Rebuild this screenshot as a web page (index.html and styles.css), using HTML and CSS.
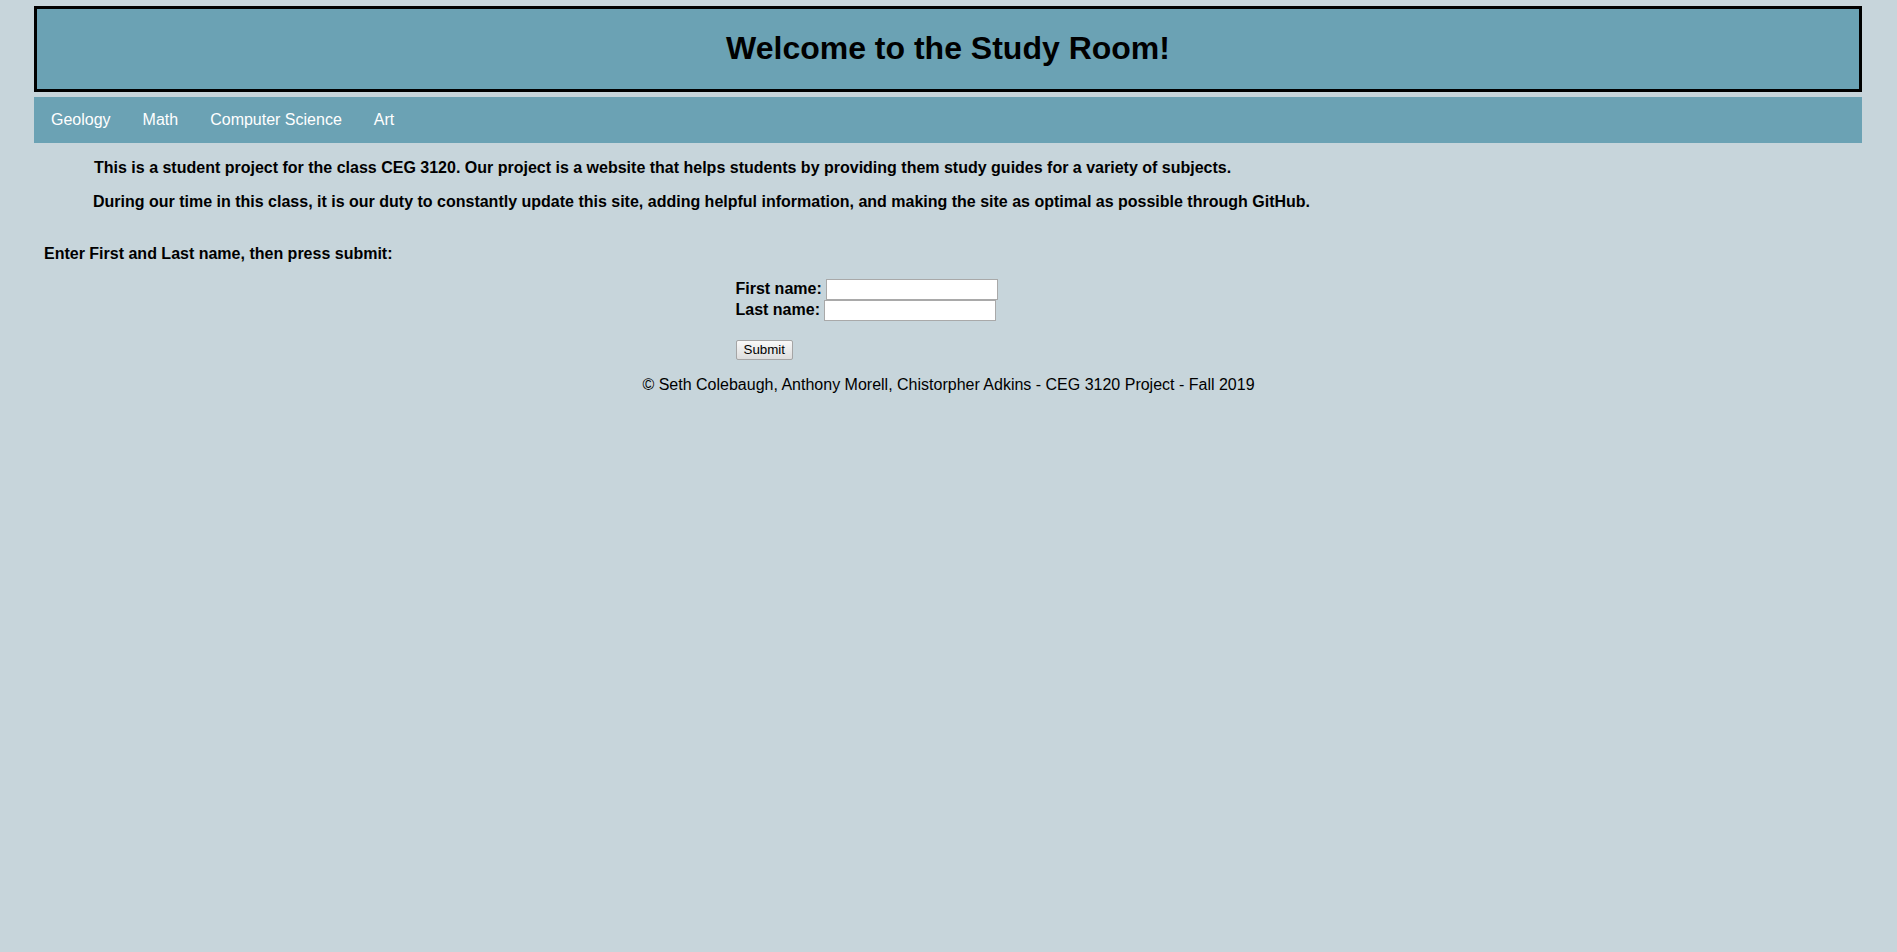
FILE: index.html
```html
<!DOCTYPE html>
<html lang="en">
<head>
<meta charset="utf-8">
<title>Study Room</title>
<link rel="stylesheet" href="styles.css">
</head>
<body>
<div class="page">
  <header class="site-header">
    <h1 class="site-title">Welcome to the Study Room!</h1>
  </header>
  <nav class="site-nav">
    <a class="nav-link" href="#">Geology</a>
    <a class="nav-link" href="#">Math</a>
    <a class="nav-link" href="#">Computer Science</a>
    <a class="nav-link" href="#">Art</a>
  </nav>
  <main class="content">
    <p class="intro intro-first">This is a student project for the class CEG 3120. Our project is a website that helps students by providing them study guides for a variety of subjects.</p>
    <p class="intro">During our time in this class, it is our duty to constantly update this site, adding helpful information, and making the site as optimal as possible through GitHub.</p>
    <p class="prompt">Enter First and Last name, then press submit:</p>
    <form class="name-form" action="#">
      <span class="field-label">First name:</span> <input class="text-input" type="text" name="firstname"><br>
      <span class="field-label">Last name:</span> <input class="text-input" type="text" name="lastname"><br>
      <br>
      <input class="submit-btn" type="submit" value="Submit">
    </form>
    <footer class="site-footer">© Seth Colebaugh, Anthony Morell, Chistorpher Adkins - CEG 3120 Project - Fall 2019</footer>
  </main>
</div>
</body>
</html>
```
FILE: styles.css
```css
html {
  background: #c7d5db;
}

body {
  margin: 0;
  background: #c7d5db;
  font-family: "Liberation Sans", Arial, sans-serif;
  font-size: 16px;
  color: #000;
}

.page {
  margin: 6px 35px 0 34px;
}

.site-header {
  background: #6ba2b4;
  border: 3px solid #000;
  text-align: center;
  margin-bottom: 5px;
}

.site-title {
  font-size: 32px;
  font-weight: bold;
  margin: 0.67em 0;
}

.site-nav {
  display: flex;
  background: #6ba2b4;
}

.nav-link {
  display: block;
  padding: 14px 16px 14px 17px;
  margin-right: -1px;
  color: #fff;
  text-decoration: none;
}

.content {
  padding: 0 9px 0 10px;
}

.intro {
  font-weight: bold;
  margin: 16px 0;
  padding-left: 49px;
}

.intro-first {
  padding-left: 50px;
}

.prompt {
  font-weight: bold;
  margin: 34px 0 16px;
}

.name-form {
  width: 426px;
  margin: 0 auto;
  font-weight: bold;
}

.text-input {
  box-sizing: border-box;
  width: 172px;
  height: 21px;
  padding: 2px;
  border: 1px solid #a9a9a9;
  background: #fff;
  font-family: "Liberation Sans", Arial, sans-serif;
  font-size: 13.33px;
  vertical-align: baseline;
  margin: 0;
}

.submit-btn {
  box-sizing: border-box;
  height: 20px;
  padding: 1px 7px;
  border: 1px solid #a5a5a5;
  border-radius: 2px;
  background: linear-gradient(#f8f8f8, #dddddd);
  font-family: "Liberation Sans", Arial, sans-serif;
  font-size: 13.33px;
  color: #000;
  margin: 1px 0 0;
}

.site-footer {
  text-align: center;
  padding-top: 16px;
}
```
